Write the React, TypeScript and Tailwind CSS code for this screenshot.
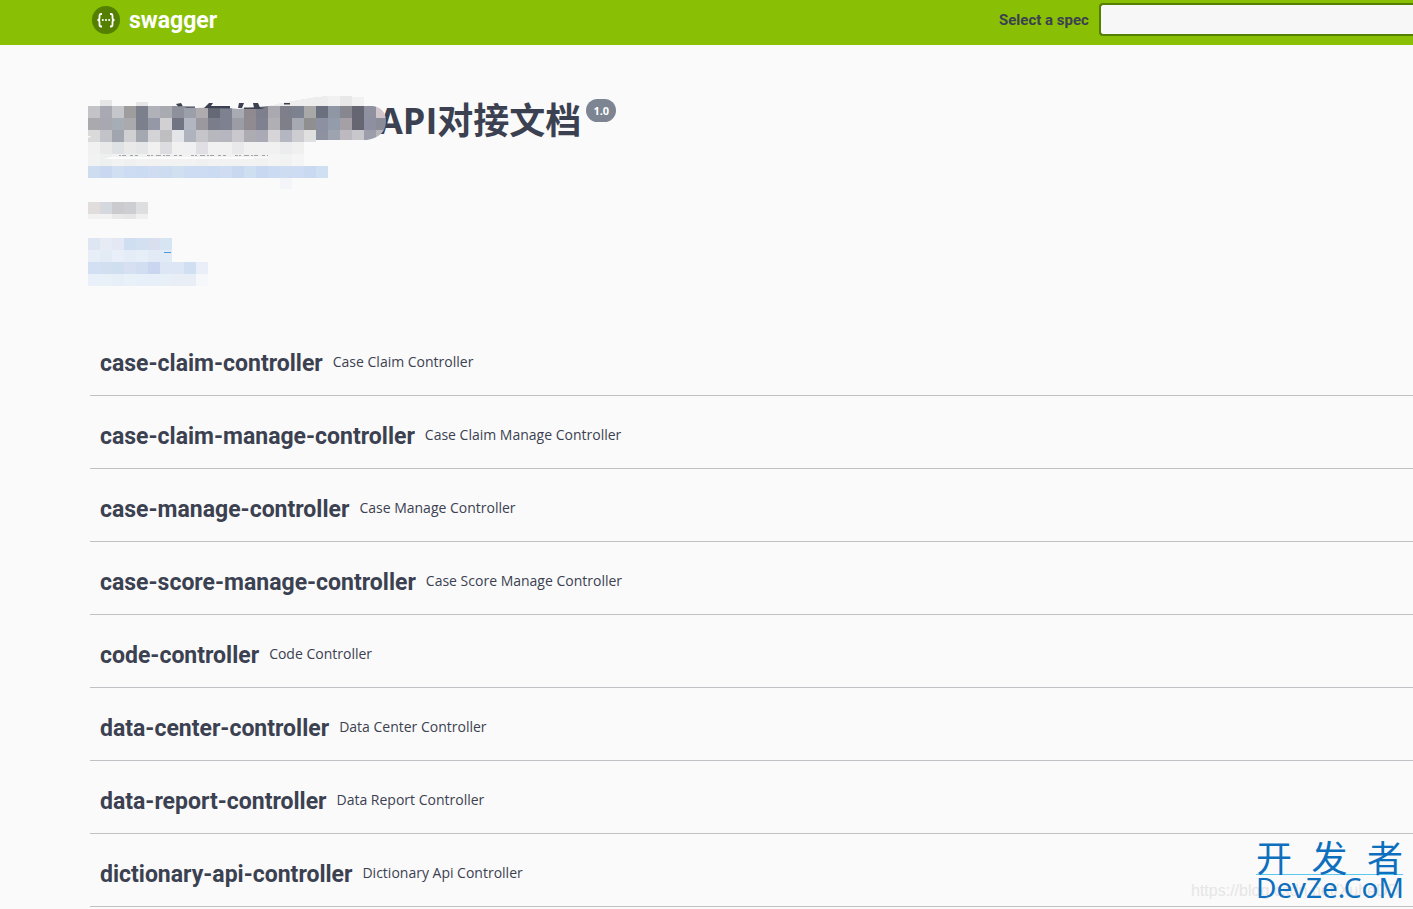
import React from "react";

const controllers = [
  ["case-claim-controller", "Case Claim Controller"],
  ["case-claim-manage-controller", "Case Claim Manage Controller"],
  ["case-manage-controller", "Case Manage Controller"],
  ["case-score-manage-controller", "Case Score Manage Controller"],
  ["code-controller", "Code Controller"],
  ["data-center-controller", "Data Center Controller"],
  ["data-report-controller", "Data Report Controller"],
  ["dictionary-api-controller", "Dictionary Api Controller"],
];

const titleRows = [
  "c4c4c8 a8a9b3 c5c6ca 9f9c9d 7c808c b0b1b9 a9abb0 8e919c 9b9fa9 b0abaf 656975 7e8290 a9abb3 8e8a8f 7e7f8c a9a9af 7d7f8b 7d8290 a8a8a8 6a707e 8f97a5 87888f 656672 9091a0 cfc5ca",
  "a9a9ae a8a9b0 a7adb5 a9a9ae 7c808c 9598a6 d2d0d2 707483 b2b6c1 9b989f 7b7e8a 7e8290 9c9ca4 8f8b90 7f8190 b0afb4 7f7f8a a6a9b2 8f8f90 8c90a0 939cab a59fa6 656672 8e8fa0 8a8c98",
  "dadada c2c3c9 a0a5af d0d0d3 a4a8b0 d4d4d7 bfbfc2 e3e5e9 afb3bd c5c5ca b7b7be b5b6bf cbc8cd adacb3 a9aab5 d7d5d7 b4b7c2 cdcdd1 e0e0e1 8e919f 9da4b0 bcb9c0 c8c7cc 9d9eab b5b5ba",
].map((r) => r.split(" "));

// Cells of the title band; the last columns end at the column where the API title starts.
const titleCells = titleRows.map((row) => {
  const head = row.slice(0, 12);
  const tail = row.slice(12);
  return [...head, ...tail];
});

const lowerRows: [number, string[]][] = [
  [142, "f1f1f1 e9e9ea dfe2e5 e9e9e9 e4e6e8 f1f1f1 dddce0 f1f1f1 f0f0f2 e1dfe3 f1f1f1 f1f1f1 e9e9ec f1f1f1 f1f1f1 f1f1f1 ececee f0f0f0".split(" ")],
  [154, "f2f2f2 eeefef f2f2f2 eff0f0 f2f2f2 f2f2f2 f2f2f2 f2f2f2 f2f2f2 f0f0f0 f2f2f2 f2f2f2 f2f2f2 f2f2f2 f2f2f2 f4f4f4 f1f2f2 f5f5f5".split(" ")],
  [166, "cedcf2 c9d8f0 d0dff2 cddcf2 cbdcf2 cfdcf1 cedcf2 d0e0f1 cddcf2 cddcf2 cbdbf2 cfdcf2 c8d8f0 cedff1 c8d8f1 cbdbf2 cedcf1 cddcf2 c9d9f0 d0e0f3".split(" ")],
  [202, "e1dddd d5d9df cbcacc ccced2 dddee0".split(" ")],
  [214, "f2f2f2 f2f2f2 e9e9e9 e6e6e6 f0f0f0".split(" ")],
  [238, "dfe6f3 e7ebf6 e4e8f4 d0def1 d2e0f1 dadff0 d7e5f3".split(" ")],
  [250, "e8eef7 e3ecf5 e8eff8 e4edf7 e6eef7 e2eaf5 e1ebf5".split(" ")],
  [262, "d3dff2 d2dff1 d0dff0 d6e0f2 d1def2 cad6ef dce6f4 dde6f4 d1dff3 e9eef8".split(" ")],
  [274, "eaf0f9 e8f0f8 e6eff7 e8f0f8 e7eff8 e7f0f8 e7f0f7 e9edf6 e9edf6 f5f7fa".split(" ")],
];

function Redaction() {
  return (
    <svg
      aria-hidden="true"
      className="pointer-events-none absolute top-0 left-0"
      width="400"
      height="300"
      viewBox="0 0 400 300"
      shapeRendering="crispEdges"
    >
      <defs>
        <clipPath id="brush">
          <path d="M88 106H176L196 108L220 107L238 109L268 106H373Q386 108 386 122Q385 137 367 140H316V142H88Z" />
        </clipPath>
      </defs>
      <path d="M100 100h12v6h-12zM136 102h12v4h-12z" fill="#e6e6e7" />
      <path d="M268 106L286 102L316 97L328 96V106z" fill="#ededed" />
      <path d="M328 96h12v10h-12zM352 97h12v9h-12z" fill="#f1f1f1" />
      <path d="M340 96h12v10h-12z" fill="#e8e8e8" />
      <g clipPath="url(#brush)">
        {titleCells.map((row, r) =>
          row.map((c, i) => (
            <rect key={r + "-" + i} x={88 + i * 12} y={106 + r * 12} width="12" height="12" fill={"#" + c} />
          )),
        )}
      </g>
      {lowerRows.map(([y, row]) =>
        row.map((c, i) => (
          <rect key={y + "-" + i} x={88 + i * 12} y={y} width="12" height={y === 214 ? 5 : 12} fill={"#" + c} />
        )),
      )}
      <g fill="#3b4151" shapeRendering="geometricPrecision">
        <path d="M176 104l5 -1 2 3.500h-5zM182 106.500h13v1.300h-8z" />
        <path d="M204 108l5 -5h4l-2 3h19v2.500z" />
        <path d="M239 103h5l-2 5h-4zM253 103h5l2 4.500h6l-5 1.500h-17v-1.500h10zM284 103h6v1.500h-6z" />
      </g>
      <path d="M88 136L92 136L88 138z" fill="#f4f4f4" />
      <path d="M102 158L116 157H268V158L240 159H108z" fill="#fcfcfc" />
      <path d="M119 155.500H268" stroke="#a3a3a8" strokeDasharray="2 1 4 4 3 2 3 9 3 1 2 3 5 2" />
      <path d="M280 178h12v11h-12z" fill="#f3f5f9" />
      <path d="M164 252.500h7" stroke="#4a9ade" />
    </svg>
  );
}

function Watermark() {
  return (
    <div aria-hidden="true" className="pointer-events-none absolute right-2.5 bottom-1 h-[68px] w-[212px]">
      <span className="absolute bottom-1 left-0 font-['Liberation_Sans'] text-base leading-5 whitespace-nowrap text-[#e6e6e6]">
        https://blog.csdn.net/XuheDD
      </span>
      <div className="absolute top-0 right-0 w-[147px] text-[#0d6fbd]">
        <div className="flex h-[38px] items-center justify-between border-b border-[#5cc8ee] font-['Noto_Sans_CJK_SC',sans-serif] text-[36px] leading-[38px] font-normal">
          <span>开</span>
          <span>发</span>
          <span>者</span>
        </div>
        <div className="font-['Noto_Sans',sans-serif] text-[28px] leading-[24px] whitespace-nowrap">DevZe.CoM</div>
      </div>
    </div>
  );
}

export default function App() {
  return (
    <div className="relative min-h-screen overflow-hidden bg-[#fafafa] font-['Open_Sans','Noto_Sans_CJK_SC',sans-serif] text-[#3b4151]">
      <header className="flex h-[45px] items-start bg-[#89bf04] pl-[92px]">
        <a href="#" className="flex h-10 items-center gap-[9px] font-['Roboto',sans-serif] text-[23px] font-bold text-white">
          <svg width="28" height="28" viewBox="0 0 28 28" fill="none" aria-hidden="true">
            <circle cx="14" cy="14" r="14" fill="#547f00" />
            <path
              d="M10 8H9Q7.500 8 7.500 10V12Q7.500 14 5.500 14Q7.500 14 7.500 16V18.500Q7.500 20.500 9 20.500H10M18 8H19Q20.500 8 20.500 10V12Q20.500 14 22.500 14Q20.500 14 20.500 16V18.500Q20.500 20.500 19 20.500H18"
              stroke="#fff"
              strokeWidth="1.800"
            />
            <g fill="#fff">
              <circle cx="10.800" cy="14" r="1.100" />
              <circle cx="14" cy="14" r="1.100" />
              <circle cx="17.200" cy="14" r="1.100" />
            </g>
          </svg>
          <span className="pt-0.5">swagger</span>
        </a>
        <div className="ml-auto flex w-[414px] shrink-0 items-center gap-2.5 pt-[3px]">
          <label htmlFor="spec" className="pt-0.5 font-['Roboto',sans-serif] text-[15px] font-bold whitespace-nowrap">
            Select a spec
          </label>
          <select id="spec" className="h-[33px] min-w-0 flex-1 appearance-none rounded-l border-2 border-r-0 border-[#547f00] bg-[#f7f7f7]" />
        </div>
      </header>

      <main className="pl-[90px]">
        <section className="h-[278px] pt-[52px]">
          <h1 className="flex items-start pl-[288px] text-4xl leading-[48px] font-bold whitespace-nowrap">
            API对接文档
            <span className="mt-0.5 ml-[5px] rounded-full bg-[#7d8492] px-[7px] text-[11px] leading-[23px] text-white">1.0</span>
          </h1>
        </section>
        {controllers.map(([name, description]) => (
          <h2 key={name} className="flex h-[73px] items-center gap-2.5 border-b border-[#c0c1c4] pt-2.5 pl-2.5">
            <a href={"#" + name} className="font-['Roboto',sans-serif] text-[23px] font-bold">
              {name}
            </a>
            <small className="pb-1 text-sm">{description}</small>
          </h2>
        ))}
      </main>
      <Redaction />
      <Watermark />
    </div>
  );
}
